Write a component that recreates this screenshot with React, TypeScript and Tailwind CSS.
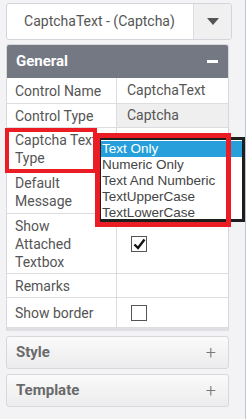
import React from 'react'

const rows: { label: string; h: string; value?: React.ReactNode; readOnly?: boolean }[] = [
    { label: 'Control Name', h: 'h-[26px]', value: 'CaptchaText' },
    { label: 'Control Type', h: 'h-[24px]', value: 'Captcha', readOnly: true },
    { label: 'Captcha Text Type', h: 'h-[43px]' },
    { label: 'Default Message', h: 'h-[43px]' },
    { label: 'Show Attached Textbox', h: 'h-[60px]', value: 'checked' },
    { label: 'Remarks', h: 'h-[24px]' },
    { label: 'Show border', h: 'h-[30px]', value: 'unchecked' },
]

const options = ['Text Only', 'Numeric Only', 'Text And Numberic', 'TextUpperCase', 'TextLowerCase']

function Checkbox({ checked }: { checked: boolean }) {
    return (
        <div className="w-[16px] h-[16px] border border-[#555] bg-white flex items-center justify-center">
            {checked && (
                <svg width="13" height="12" viewBox="0 0 13 12">
                    <path d="M1.5 6.5 L5 10 L11.5 1.5" fill="none" stroke="#111" strokeWidth="2.4" />
                </svg>
            )}
        </div>
    )
}

function CollapsedPanel({ title }: { title: string }) {
    return (
        <div className="h-[33px] w-[223px] rounded-[3px] border border-[#d6d8dc] bg-gradient-to-b from-[#fafafa] to-[#ececee] flex items-center justify-between pl-[9px] pr-[12px]">
            <span className="text-[15px] font-bold text-[#6a6a6a]">{title}</span>
            <span className="text-[18px] font-light text-[#777] leading-none">+</span>
        </div>
    )
}

export default function App() {
    return (
        <div className="relative w-[247px] h-[419px] overflow-hidden flex bg-white" style={{ fontFamily: 'Roboto, "Liberation Sans", sans-serif' }}>
            <div className="w-[245px] h-full bg-[#f3f3f5] pl-[6px] pt-[3px] flex flex-col">
                {/* Control selector */}
                <div className="w-[226px] h-[37px] rounded-[3px] border border-[#d3d5da] bg-white flex">
                    <div className="flex-1 flex items-center justify-center text-[14px] text-[#555] pr-[1px]">
                        CaptchaText - (Captcha)
                    </div>
                    <div className="w-[38px] border-l border-[#dcdde0] bg-[#f0f0f1] rounded-r-[3px] flex items-center justify-center">
                        <svg width="12" height="7" viewBox="0 0 12 7">
                            <path d="M0 0 H12 L6 7 Z" fill="#555" />
                        </svg>
                    </div>
                </div>

                {/* General panel */}
                <div className="mt-[4px] w-[223px] rounded-t-[3px] border border-[#d6d8dc] border-b-[3px] border-b-[#dfe0e3] bg-white">
                    <div className="h-[33px] bg-[#737883] rounded-t-[2px] flex items-center justify-between pl-[9px] pr-[10px]">
                        <span className="text-[15px] font-bold text-white">General</span>
                        <span className="w-[11px] h-[3px] bg-white" />
                    </div>
                    {rows.map((r) => (
                        <div key={r.label} className={`flex border-b border-[#dcdde1] ${r.h}`}>
                            <div className="w-[110px] border-r border-[#dcdde1] flex items-center pl-[8px] text-[14px] leading-[18px] text-[#555]">
                                <span className="w-[92px]">{r.label}</span>
                            </div>
                            <div className={`flex-1 flex items-center pl-[10px] text-[14px] text-[#555] ${r.readOnly ? 'bg-[#efeff0]' : ''}`}>
                                {r.value === 'checked' ? (
                                    <div className="pl-[4px]"><Checkbox checked /></div>
                                ) : r.value === 'unchecked' ? (
                                    <div className="pl-[4px]"><Checkbox checked={false} /></div>
                                ) : (
                                    r.value
                                )}
                            </div>
                        </div>
                    ))}
                </div>

                <div className="mt-[5px]"><CollapsedPanel title="Style" /></div>
                <div className="mt-[5px]"><CollapsedPanel title="Template" /></div>
            </div>
            <div className="w-[1px] h-full bg-[#b9c5d2]" />

            {/* Open dropdown list */}
            <div className="absolute left-[98px] top-[137px] w-[147px] h-[85px] border-[3px] border-[#1e1e1e] bg-white pt-[1px]" style={{ fontFamily: '"Liberation Sans", Arial, sans-serif' }}>
                {options.map((o, i) => (
                    <div key={o} className={`h-[16px] leading-[16px] text-[13.5px] pl-[1px] ${i === 0 ? 'bg-[#269fda] text-white' : 'text-[#444]'}`}>
                        {o}
                    </div>
                ))}
            </div>

            {/* Annotation boxes */}
            <div className="absolute left-[5px] top-[128px] w-[92px] h-[45px] border-[4px] border-[#ec1c24]" />
            <div className="absolute left-[95px] top-[133px] w-[136px] h-[94px] border-[5px] border-[#ec1c24]" />
        </div>
    )
}
